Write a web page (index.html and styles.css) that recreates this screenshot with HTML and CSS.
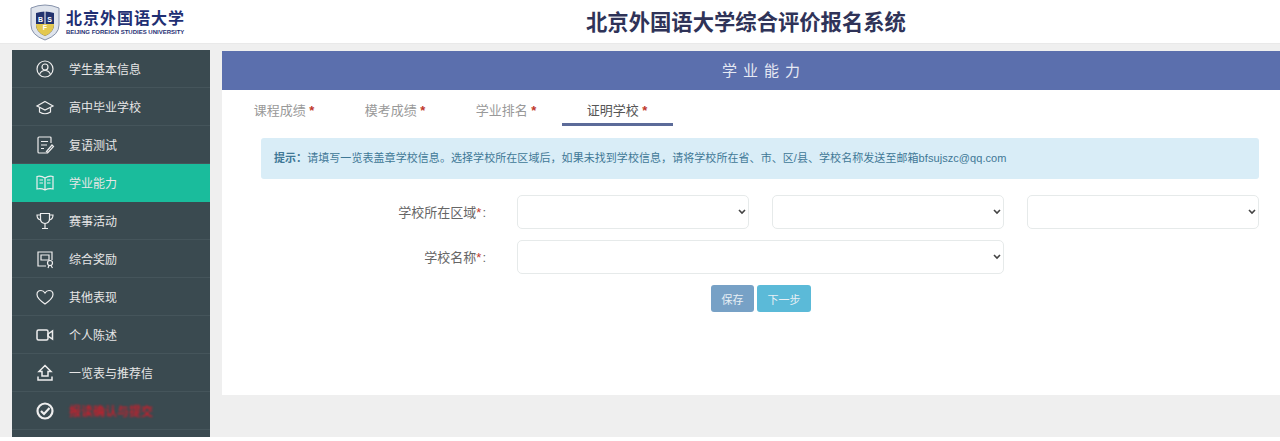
FILE: index.html
```html
<!DOCTYPE html>
<html lang="zh-CN">
<head>
    <meta charset="UTF-8">
    <meta name="viewport" content="width=device-width, initial-scale=1.0">
    <title>北京外国语大学综合评价报名系统</title>
    <link rel="stylesheet" href="styles.css">
</head>
<body>
    <div class="header">
        <div class="logo">
            <svg class="logo-badge" viewBox="0 0 32 38" width="32" height="38">
                <path d="M2 5 Q16 -1 30 5 V22 Q30 32 16 37 Q2 32 2 22 Z" fill="#dfe4ec" stroke="#8793ab" stroke-width="1"/>
                <path d="M7 10 Q16 7 25 10 V22 Q25 29 16 33 Q7 29 7 22 Z" fill="#22336f"/>
                <path d="M7 21 H25 V22 Q25 29 16 33 Q7 29 7 22 Z" fill="#e3c84f"/>
                <path d="M16 8 V21" stroke="#fff" stroke-width="1"/>
                <text class="badge-text" x="11.5" y="19">B</text>
                <text class="badge-text" x="20.5" y="19">S</text>
                <text class="badge-text" x="16" y="27" fill="#22336f">F</text>
            </svg>
            <div class="logo-text">
                <div class="logo-cn">北京外国语大学</div>
                <div class="logo-en">BEIJING FOREIGN STUDIES UNIVERSITY</div>
            </div>
        </div>
        <h1 class="site-title">北京外国语大学综合评价报名系统</h1>
    </div>

    <div class="main">
        <div class="sidebar">
            <a class="nav-item">
                <svg class="nav-icon" viewBox="0 0 20 20"><circle cx="10" cy="10" r="8"/><circle cx="10" cy="8" r="3"/><path d="M4.5 15.5 Q6 11.5 10 11.5 Q14 11.5 15.5 15.5"/></svg>
                学生基本信息
            </a>
            <a class="nav-item">
                <svg class="nav-icon" viewBox="0 0 20 20"><path d="M10 4.5 L18 9 L10 13 L2 9 Z"/><path d="M4.5 10.5 V15 Q10 18.5 15.5 15 V10.5"/></svg>
                高中毕业学校
            </a>
            <a class="nav-item">
                <svg class="nav-icon" viewBox="0 0 20 20"><path d="M16 8 V3 Q16 2 15 2 H4 Q3 2 3 3 V17 Q3 18 4 18 H13"/><path d="M6 6.5 H13 M6 10 H12 M6 13.5 H9"/><path d="M11.5 16.5 L17 10 L18.5 11.5 L13 17.5 Z"/></svg>
                复语测试
            </a>
            <a class="nav-item active">
                <svg class="nav-icon" viewBox="0 0 20 20"><path d="M10 5 Q6 2.5 2 3.5 V16 Q6 15 10 17 Q14 15 18 16 V3.5 Q14 2.5 10 5 Z M10 5 V17"/><path d="M4.5 7 H8 M4.5 10 H8 M12 7 H15.5 M12 10 H15.5"/></svg>
                学业能力
            </a>
            <a class="nav-item">
                <svg class="nav-icon" viewBox="0 0 20 20"><path d="M5.5 2.5 H14.5 V8 Q14.5 12 10 12.5 Q5.5 12 5.5 8 Z"/><path d="M5.5 4 H2 Q2 8.5 6 9 M14.5 4 H18 Q18 8.5 14 9"/><path d="M10 12.5 V17 M7 17.5 H13"/></svg>
                赛事活动
            </a>
            <a class="nav-item">
                <svg class="nav-icon" viewBox="0 0 20 20"><path d="M11 17 H3 V3 H17 V11"/><path d="M6 6 H14 V11 H6 Z"/><circle cx="15" cy="14" r="2.5"/><path d="M14 16.5 L13 19 M16 16.5 L17.5 19"/></svg>
                综合奖励
            </a>
            <a class="nav-item">
                <svg class="nav-icon" viewBox="0 0 20 20"><path d="M10 17 Q2 11.5 2 7.5 Q2 3.5 6 3.5 Q8.5 3.5 10 6 Q11.5 3.5 14 3.5 Q18 3.5 18 7.5 Q18 11.5 10 17 Z"/></svg>
                其他表现
            </a>
            <a class="nav-item">
                <svg class="nav-icon icon-bold" viewBox="0 0 20 20"><rect x="2" y="5" width="11" height="10" rx="1.5"/><path d="M13 9 L17.5 6 V14 L13 11 Z"/></svg>
                个人陈述
            </a>
            <a class="nav-item">
                <svg class="nav-icon icon-bold" viewBox="0 0 20 20"><path d="M10 2.5 L16 8.5 H13 V13 H7 V8.5 H4 Z"/><path d="M3 13.5 V17 H17 V13.5"/></svg>
                一览表与推荐信
            </a>
            <a class="nav-item">
                <svg class="nav-icon icon-heavy" viewBox="0 0 20 20"><circle cx="10" cy="10" r="7.5"/><path d="M6 10 L9 13 L14.5 7"/></svg>
                <span class="nav-submit">报读确认与提交</span>
            </a>
        </div>

        <div class="content">
            <div class="content-title">学业能力</div>
            <div class="tabs">
                <div class="tab">课程成绩 <span class="star">*</span></div>
                <div class="tab">模考成绩 <span class="star">*</span></div>
                <div class="tab">学业排名 <span class="star">*</span></div>
                <div class="tab active">证明学校 <span class="star">*</span></div>
            </div>
            <div class="notice">
                <b>提示：</b>请填写一览表盖章学校信息。选择学校所在区域后，如果未找到学校信息，请将学校所在省、市、区/县、学校名称发送至邮箱bfsujszc@qq.com
            </div>
            <div class="form">
                <label class="form-label">学校所在区域<span class="star">*</span>:</label>
                <select class="form-select"></select>
                <select class="form-select"></select>
                <select class="form-select"></select>
                <label class="form-label">学校名称<span class="star">*</span>:</label>
                <select class="form-select span-two"></select>
            </div>
            <div class="form-buttons">
                <button class="btn btn-save">保存</button>
                <button class="btn btn-next">下一步</button>
            </div>
        </div>
    </div>
</body>
</html>
```

FILE: styles.css
```css
body {
    font-family: "Liberation Sans", "Noto Sans CJK SC", sans-serif;
    background: white;
    margin: 0;
    padding: 0;
    height: 441px;
    overflow: hidden;
    color: #555;
}

.header {
    height: 43px;
    background: white;
    display: flex;
    align-items: center;
    border-bottom: 1px solid #e9e9e9;
}

.logo {
    display: flex;
    align-items: center;
    gap: 5px;
    margin-left: 29px;
    width: 300px;
}

.badge-text {
    font-size: 7px;
    font-weight: bold;
    fill: white;
    text-anchor: middle;
}

.logo-text {
    color: #1f2f73;
}

.logo-cn {
    font-family: "Liberation Serif", "Noto Sans CJK SC", serif;
    font-size: 16px;
    font-weight: bold;
    letter-spacing: 1px;
    line-height: 21px;
}

.logo-en {
    font-size: 6px;
    font-weight: bold;
    line-height: 7px;
    white-space: nowrap;
}

.site-title {
    margin: 0 0 0 257px;
    padding-top: 2px;
    font-size: 21.33px;
    line-height: 40px;
    font-weight: bold;
    color: #2f3358;
}

.main {
    display: flex;
    gap: 12px;
    height: 387px;
    padding: 6px 0 0 12px;
    background: #efefef;
}

.sidebar {
    width: 198px;
    height: 387px;
    background: #3a4a50;
    flex-shrink: 0;
}

.nav-item {
    display: flex;
    align-items: center;
    height: 37px;
    border-bottom: 1px solid #45555b;
    padding-left: 23px;
    gap: 14px;
    color: #e6e6e6;
    font-size: 12px;
}

.nav-item.active {
    background: #1abc9c;
    border-bottom-color: #1abc9c;
}

.nav-submit {
    color: #ff0f1e;
    filter: blur(0.8px);
}

.nav-icon {
    width: 20px;
    height: 20px;
    fill: none;
    stroke: #eee;
    stroke-width: 1.2;
    flex-shrink: 0;
}

.icon-bold {
    stroke-width: 1.5;
}

.icon-heavy {
    stroke-width: 2.2;
}

.content {
    width: 1058px;
    height: 344px;
    margin-top: 1px;
    background: white;
}

.content-title {
    height: 39px;
    line-height: 39px;
    padding-left: 26px;
    background: #5b6fad;
    color: #e6e9f3;
    text-align: center;
    font-size: 15px;
    letter-spacing: 6px;
}

.tabs {
    display: flex;
    padding: 10px 0 0 7px;
    height: 26px;
}

.tab {
    width: 111px;
    padding-right: 1px;
    text-align: center;
    font-size: 13px;
    color: #999;
    height: 26px;
    box-sizing: border-box;
}

.tab.active {
    color: #555;
    border-bottom: 3px solid #5c6b99;
}

.star {
    color: #c0392b;
    font-weight: bold;
}

.notice {
    margin: 12px 21px 0 39px;
    height: 41px;
    line-height: 41px;
    background: #d9edf7;
    border-radius: 3px;
    padding-left: 13px;
    font-size: 11px;
    letter-spacing: 0.06px;
    color: #3f7896;
}

.form {
    display: grid;
    grid-template-columns: 272px 232px 232px 232px;
    column-gap: 23px;
    row-gap: 11px;
    margin-top: 16px;
}

.form-label {
    align-self: center;
    justify-self: end;
    padding: 0 8px 2px 0;
    font-size: 13px;
    color: #666;
}

.form-label .star {
    font-weight: normal;
    margin-right: 1px;
}

.form-select {
    appearance: none;
    height: 34px;
    background: white url("data:image/svg+xml,%3Csvg xmlns='http://www.w3.org/2000/svg' width='8' height='6'%3E%3Cpath d='M1 1 L4 4 L7 1' fill='none' stroke='%23444' stroke-width='1.6'/%3E%3C/svg%3E") no-repeat right 2px center;
    border: 1px solid #e6eaea;
    border-radius: 5px;
}

.span-two {
    grid-column: span 2;
}

.form-buttons {
    display: flex;
    justify-content: center;
    gap: 3px;
    margin-top: 11px;
    padding-left: 20px;
}

.btn {
    height: 27px;
    padding: 0;
    border: none;
    border-radius: 3px;
    color: #e8f0f5;
    font-size: 11px;
    font-family: inherit;
}

.btn-save {
    width: 43px;
    background: #77a1c6;
}

.btn-next {
    width: 54px;
    background: #5bbad8;
}
```
